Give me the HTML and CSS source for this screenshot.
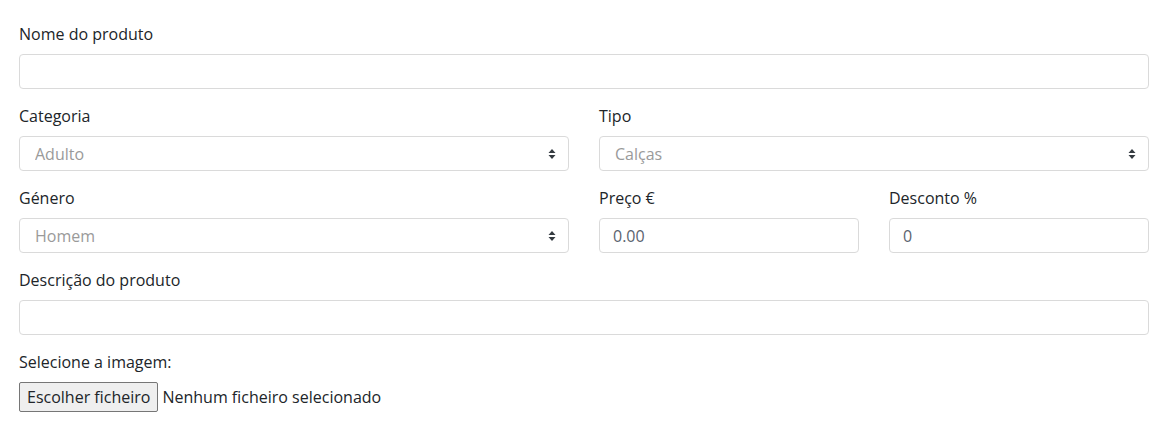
FILE: index.html
```html
<!DOCTYPE html>
<html lang="pt">
<head>
<meta charset="utf-8">
<link rel="stylesheet" href="styles.css">
</head>
<body>
<form class="form">
  <div class="group">
    <label class="label">Nome do produto</label>
    <input class="field" type="text">
  </div>
  <div class="row two">
    <div class="group">
      <label class="label">Categoria</label>
      <div class="select-wrap">
        <select class="field select"><option>Adulto</option></select>
        <svg class="arrows" width="8" height="10" viewBox="0 0 8 10"><path d="M4 0L7.5 4H0.5Z M4 10L7.5 6H0.5Z" fill="#343a40"/></svg>
      </div>
    </div>
    <div class="group">
      <label class="label">Tipo</label>
      <div class="select-wrap">
        <select class="field select"><option>Calças</option></select>
        <svg class="arrows" width="8" height="10" viewBox="0 0 8 10"><path d="M4 0L7.5 4H0.5Z M4 10L7.5 6H0.5Z" fill="#343a40"/></svg>
      </div>
    </div>
  </div>
  <div class="row three">
    <div class="group">
      <label class="label">Género</label>
      <div class="select-wrap">
        <select class="field select"><option>Homem</option></select>
        <svg class="arrows" width="8" height="10" viewBox="0 0 8 10"><path d="M4 0L7.5 4H0.5Z M4 10L7.5 6H0.5Z" fill="#343a40"/></svg>
      </div>
    </div>
    <div class="group">
      <label class="label">Preço €</label>
      <input class="field" type="text" value="0.00">
    </div>
    <div class="group">
      <label class="label">Desconto %</label>
      <input class="field" type="text" value="0">
    </div>
  </div>
  <div class="group">
    <label class="label">Descrição do produto</label>
    <input class="field" type="text">
  </div>
  <div class="group">
    <label class="label">Selecione a imagem:</label>
    <div class="file">
      <button type="button" class="file-btn">Escolher ficheiro</button>
      <span class="file-name">Nenhum ficheiro selecionado</span>
    </div>
  </div>
</form>
</body>
</html>
```
FILE: styles.css
```css
html, body {
  margin: 0;
  background: #fff;
}
body {
  font-family: "Open Sans", "Liberation Sans", sans-serif;
  font-size: 16px;
  color: #212529;
  padding: 22px 22px 0 19px;
}
.form {
  display: flex;
  flex-direction: column;
}
.group {
  display: flex;
  flex-direction: column;
  margin-bottom: 15px;
}
.label {
  line-height: 24px;
  margin-bottom: 8px;
}
.row {
  display: grid;
  column-gap: 30px;
}
.two {
  grid-template-columns: 1fr 1fr;
}
.three {
  grid-template-columns: 550px 1fr 1fr;
}
.field {
  box-sizing: border-box;
  width: 100%;
  height: 35px;
  border: 1px solid #dadada;
  border-radius: 4px;
  padding: 0 13px;
  font-family: inherit;
  font-size: 16px;
  color: #5b6470;
  background: #fff;
  outline: none;
  margin: 0;
}
.select-wrap {
  position: relative;
}
.select {
  appearance: none;
  -webkit-appearance: none;
  padding-left: 15px;
  color: #9a9a9a;
}
.arrows {
  position: absolute;
  right: 13px;
  top: 13px;
  pointer-events: none;
}
.file {
  display: flex;
  align-items: center;
  gap: 4px;
}
.file-btn {
  height: 30px;
  padding: 0 7px;
  font-family: inherit;
  font-size: 16px;
  color: #212529;
  background: #efefef;
  border: 1px solid #767676;
  border-radius: 2px;
  margin: 0;
}
.file-name {
  color: #212529;
}
```
